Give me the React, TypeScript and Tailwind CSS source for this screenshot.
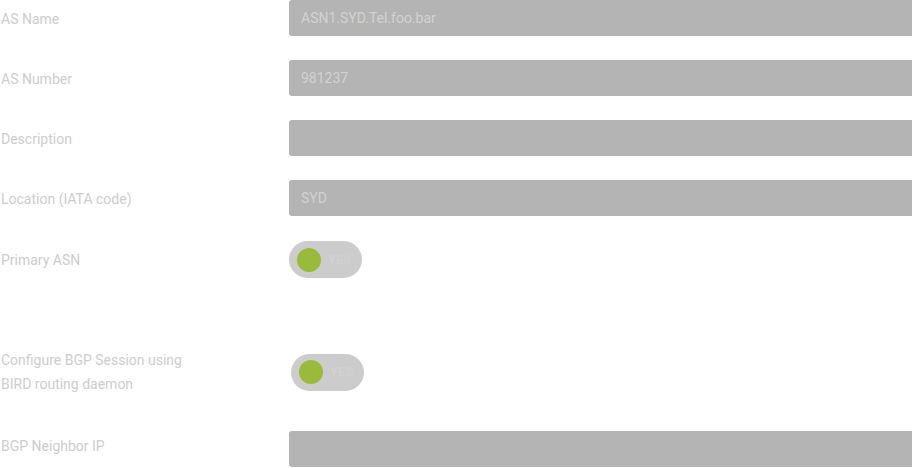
const font = { fontFamily: 'Roboto, "Liberation Sans", sans-serif' };

function Field({ label, value, labelClass = 'translate-y-px' }: { label: string; value?: string; labelClass?: string }) {
  return (
    <div className="flex items-center">
      <label className={`w-[289px] shrink-0 pl-px text-sm text-[#cdcdcd] ${labelClass}`}>{label}</label>
      <div className="flex h-9 flex-1 items-center rounded-l-[3px] bg-[#b3b4b3] px-3 text-sm text-[#d2d2d2]">{value}</div>
    </div>
  );
}

function Toggle({ className = '' }: { className?: string }) {
  return (
    <div className={`flex h-[37px] w-[73px] items-center rounded-full bg-[#cccccc] pl-2 ${className}`}>
      <span className="h-6 w-6 rounded-full bg-[#9aba3a]" />
      <span className="ml-[7px] text-[13px] font-bold text-[#d1d1d1]">YES</span>
    </div>
  );
}

export default function App() {
  return (
    <div className="h-[468px] w-[912px] overflow-hidden bg-white" style={font}>
      <div className="flex flex-col gap-6">
        <Field label="AS Name" value="ASN1.SYD.Tel.foo.bar" />
        <Field label="AS Number" value="981237" />
        <Field label="Description" />
        <Field label="Location (IATA code)" value="SYD" />
      </div>
      <div className="mt-[25px] flex items-center">
        <label className="w-[289px] shrink-0 pl-px text-sm text-[#cdcdcd]">Primary ASN</label>
        <Toggle />
      </div>
      <div className="mt-[70px] flex items-center">
        <label className="w-[289px] shrink-0 pl-px text-sm leading-6 text-[#cdcdcd]">
          Configure BGP Session using
          <br />
          BIRD routing daemon
        </label>
        <Toggle className="ml-[2px]" />
      </div>
      <div className="mt-[35px]">
        <Field label="BGP Neighbor IP" labelClass="-translate-y-[3px]" />
      </div>
    </div>
  );
}
